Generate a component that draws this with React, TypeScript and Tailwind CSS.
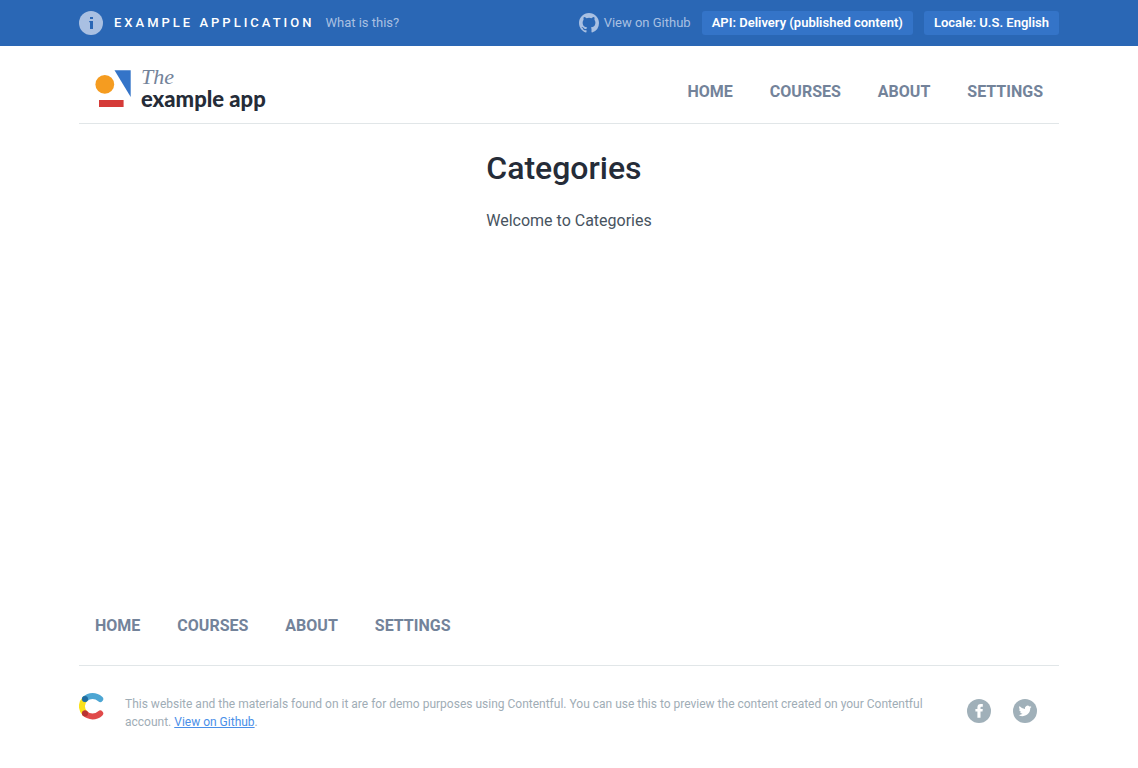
import React from "react";

const links = ["Home", "Courses", "About", "Settings"];

function Nav({ label }: { label: string }) {
  return (
    <nav aria-label={label}>
      <ul className="flex flex-wrap gap-x-[37px] gap-y-2 px-4 text-base leading-6 font-bold text-[#73839a] uppercase">
        {links.map((link) => (
          <li key={link}>
            <a href={"#" + link.toLowerCase()}>{link}</a>
          </li>
        ))}
      </ul>
    </nav>
  );
}

function InfoIcon() {
  return (
    <svg className="size-6 shrink-0" viewBox="0 0 24 24" aria-hidden="true">
      <circle cx="12" cy="12" r="12" fill="#a9c0e2" />
      <path d="M11 6h3v2h-3zM10.2 10H14v8h-3v-6.8h-.8z" fill="#2a67b5" />
    </svg>
  );
}

function GithubIcon() {
  return (
    <svg className="size-5 shrink-0" viewBox="0 0 16 16" aria-hidden="true">
      <path
        fill="currentColor"
        d="M8 0C3.58 0 0 3.58 0 8c0 3.54 2.29 6.53 5.47 7.59.4.07.55-.17.55-.38 0-.19-.01-.82-.01-1.49-2.01.37-2.53-.49-2.69-.94-.09-.23-.48-.94-.82-1.13-.28-.15-.68-.52-.01-.53.63-.01 1.08.58 1.23.82.72 1.21 1.87.87 2.33.66.07-.52.28-.87.51-1.07-1.78-.2-3.64-.89-3.64-3.95 0-.87.31-1.59.82-2.15-.08-.2-.36-1.02.08-2.12 0 0 .67-.21 2.2.82a7.6 7.6 0 0 1 4 0c1.53-1.04 2.2-.82 2.2-.82.44 1.1.16 1.92.08 2.12.51.56.82 1.27.82 2.15 0 3.07-1.87 3.75-3.65 3.95.29.25.54.73.54 1.48 0 1.07-.01 1.93-.01 2.2 0 .21.15.46.55.38A8.01 8.01 0 0 0 16 8c0-4.42-3.58-8-8-8z"
      />
    </svg>
  );
}

function LogoMark() {
  return (
    <svg className="h-[38px] w-9 shrink-0" viewBox="0 0 36 38" aria-hidden="true">
      <circle cx="9.8" cy="14.4" r="9.4" fill="#f59c20" />
      <path d="M19.5 0.3H35.7v26.7z" fill="#3474c8" />
      <path d="M4 30h24.6v7H4z" fill="#d53b38" />
    </svg>
  );
}

function ContentfulMark() {
  return (
    <svg className="h-7 w-[25px] shrink-0" viewBox="0 0 25 28" fill="none" strokeWidth="6" strokeLinecap="round" role="img" aria-label="Contentful">
      <path d="M6 7C1.9 11.2 1.9 17.2 6 21.4" stroke="#f9e11c" />
      <path d="M6 7C10.3 3 16.7 3 21.2 7" stroke="#4da6d3" />
      <path d="M6 21.4C10.3 25.4 16.7 25.4 21.2 21.4" stroke="#e04a4a" />
      <circle cx="6" cy="7" r="3" fill="#1f6b9f" />
      <circle cx="6" cy="21.4" r="3" fill="#b83432" />
    </svg>
  );
}

function FacebookIcon() {
  return (
    <svg className="size-6" viewBox="0 0 24 24" aria-hidden="true">
      <circle cx="12" cy="12" r="12" fill="#a0b0b9" />
      <path
        fill="#fff"
        d="M10.4 18.8v-6.2H8.4V9.9h2V8.4c0-2.1 1.1-3.3 3.5-3.3h1.9v2.6h-1.2c-.9 0-1.1.4-1.1 1.1v1.1h2.3l-.3 2.7h-2v6.2z"
      />
    </svg>
  );
}

function TwitterIcon() {
  return (
    <svg className="size-6" viewBox="0 0 24 24" aria-hidden="true">
      <circle cx="12" cy="12" r="12" fill="#a0b0b9" />
      <path
        fill="#fff"
        transform="translate(5.6 5.4) scale(.54)"
        d="M23.95 4.57a10 10 0 0 1-2.82.78 4.96 4.96 0 0 0 2.16-2.73c-.95.56-2 .96-3.13 1.19a4.92 4.92 0 0 0-8.38 4.48C7.69 8.1 4.07 6.13 1.64 3.16a4.92 4.92 0 0 0 1.52 6.57 4.9 4.9 0 0 1-2.23-.61v.06a4.92 4.92 0 0 0 3.95 4.83 5 5 0 0 1-2.21.08 4.94 4.94 0 0 0 4.6 3.42A9.87 9.87 0 0 1 0 19.54a13.99 13.99 0 0 0 7.56 2.21c9.05 0 14-7.5 14-13.98 0-.21 0-.42-.02-.63a9.94 9.94 0 0 0 2.41-2.57z"
      />
    </svg>
  );
}

export default function App() {
  return (
    <div className="flex min-h-screen flex-col bg-white font-['Roboto',sans-serif]">
      <div className="bg-[#2a67b5] text-[13px] leading-6 text-[#a9c0e2]">
        <div className="mx-auto flex max-w-[980px] flex-wrap items-center justify-between gap-2 py-[11px]">
          <div className="flex items-center gap-[11px]">
            <InfoIcon />
            <strong className="font-medium tracking-[3px] text-white uppercase">Example application</strong>
            <a href="#what">What is this?</a>
          </div>
          <div className="flex items-center gap-[11px]">
            <a href="#github" className="flex items-center gap-[5px]">
              <GithubIcon />
              View on Github
            </a>
            <button type="button" className="rounded-[3px] bg-[#3474c8] px-[10px] font-semibold text-white">
              API: Delivery (published content)
            </button>
            <button type="button" className="rounded-[3px] bg-[#3474c8] px-[10px] font-semibold text-white">
              Locale: U.S. English
            </button>
          </div>
        </div>
      </div>

      <header className="mx-auto flex w-full max-w-[980px] flex-wrap items-end justify-between border-b border-[#e1e6e8] pt-5 pb-3">
        <a href="#home" className="flex items-start gap-[10px] pl-4">
          <span className="pt-1">
            <LogoMark />
          </span>
          <span className="flex flex-col pb-px">
            <span className="font-['Liberation_Serif',serif] text-[22px] leading-[22px] text-[#73839a] italic">The</span>
            <span className="font-['Lato',sans-serif] text-[22px] leading-[22px] font-black text-[#252c38]">example app</span>
          </span>
        </a>
        <div className="pb-[7px]">
          <Nav label="Main" />
        </div>
      </header>

      <main className="mx-auto grow pt-[23px]">
        <h1 className="text-[32px] leading-[42px] font-medium text-[#252c38]">Categories</h1>
        <p className="mt-5 text-base leading-6 text-[#475360]">Welcome to Categories</p>
      </main>

      <footer className="mx-auto w-full max-w-[980px]">
        <div className="border-b border-[#e1e6e8] pb-[27px]">
          <Nav label="Footer" />
        </div>
        <div className="flex items-start pt-[26px] pb-[37px]">
          <ContentfulMark />
          <p className="ml-[21px] grow basis-0 pt-[3px] text-xs leading-[18px] text-[#9fadb6]">
            This website and the materials found on it are for demo purposes using Contentful. You can use this to preview the content created on your Contentful account.{" "}
            <a href="#github" className="text-[#4a8fe8] underline">View on Github</a>.
          </p>
          <div className="ml-7 flex gap-[22px] pt-[7px] pr-[22px]">
            <a href="#facebook" aria-label="Facebook">
              <FacebookIcon />
            </a>
            <a href="#twitter" aria-label="Twitter">
              <TwitterIcon />
            </a>
          </div>
        </div>
      </footer>
    </div>
  );
}
